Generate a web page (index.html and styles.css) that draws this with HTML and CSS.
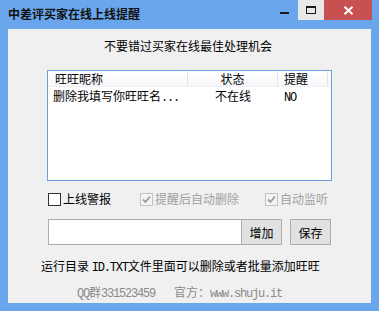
FILE: index.html
```html
<!DOCTYPE html>
<html lang="zh-CN">
<head>
<meta charset="utf-8">
<title>中差评买家在线上线提醒</title>
<link rel="stylesheet" href="styles.css">
</head>
<body>
<div class="window">
  <div class="titlebar">
    <div class="title">中差评买家在线上线提醒</div>
    <div class="controls">
      <div class="btn-min"><span class="min-glyph"></span></div>
      <div class="btn-max"><span class="max-glyph"></span></div>
      <div class="btn-close">
        <svg width="11" height="9" viewBox="0 0 11 9"><path d="M1.5 0.8 L9.5 8.2 M9.5 0.8 L1.5 8.2" stroke="#fff" stroke-width="2" fill="none"/></svg>
      </div>
    </div>
  </div>
  <div class="client">
    <div class="heading">不要错过买家在线最佳处理机会</div>
    <div class="listbox">
      <div class="list-head">
        <div class="col c1">旺旺昵称</div>
        <div class="col c2">状态</div>
        <div class="col c3">提醒</div>
        <div class="col c4"></div>
      </div>
      <div class="list-row">
        <div class="cell c1 r1">删除我填写你旺旺名<span class="mono">...</span></div>
        <div class="cell c2">不在线</div>
        <div class="cell c3"><span class="mono">NO</span></div>
      </div>
    </div>
    <div class="checks">
      <label class="chk"><span class="box"></span><span>上线警报</span></label>
      <label class="chk disabled"><span class="box checked"><svg width="11" height="11" viewBox="0 0 11 11"><path d="M2 5.5 L4.5 8 L9 2.5" stroke="#9a9a9a" stroke-width="1.8" fill="none"/></svg></span><span>提醒后自动删除</span></label>
      <label class="chk disabled"><span class="box checked"><svg width="11" height="11" viewBox="0 0 11 11"><path d="M2 5.5 L4.5 8 L9 2.5" stroke="#9a9a9a" stroke-width="1.8" fill="none"/></svg></span><span>自动监听</span></label>
    </div>
    <div class="inputrow">
      <div class="textbox"></div>
      <div class="button add">增加</div>
      <div class="button save">保存</div>
    </div>
    <div class="foot1">运行目录 <span class="mono">ID.TXT</span>文件里面可以删除或者批量添加旺旺</div>
    <div class="foot2"><span class="mono">QQ</span>群<span class="mono">331523459</span><span class="gap"></span>官方：<span class="mono">www.shuju.it</span></div>
  </div>
</div>
</body>
</html>
```
FILE: styles.css
```css
* { box-sizing: border-box; }
html, body { margin: 0; padding: 0; }
body {
  width: 379px;
  height: 311px;
  overflow: hidden;
  font-family: "Noto Sans CJK SC", "DejaVu Sans", sans-serif;
  font-size: 12px;
  color: #000;
}
.window {
  width: 379px;
  height: 311px;
  background: #6aa6ec;
  padding: 0 8px 8px 8px;
  display: flex;
  flex-direction: column;
}
.titlebar {
  height: 29px;
  display: flex;
  align-items: flex-start;
  margin-right: -1px;
}
.title {
  flex: 1;
  font-weight: bold;
  font-size: 12px;
  line-height: 28px;
  color: #111;
}
.controls { display: flex; height: 20px; }
.btn-min {
  width: 27px; height: 20px;
  position: relative;
}
.min-glyph {
  position: absolute;
  left: 9px; top: 12px;
  width: 9px; height: 2px; background: #1a1a1a;
}
.btn-max {
  width: 26px; height: 20px;
  background: #e8e8e8;
  display: flex; align-items: center; justify-content: center;
}
.max-glyph {
  display: block; width: 10px; height: 8px;
  border: 1px solid #1a1a1a; border-top-width: 2px;
}
.btn-close {
  width: 48px; height: 20px;
  background: #c75050;
  display: flex; align-items: center; justify-content: center;
}
.btn-close svg { display: block; }
.client {
  flex: 1;
  background: #f0f0f0;
  display: flex;
  flex-direction: column;
}
.mono {
  font-family: "Liberation Mono", monospace;
  font-size: 12px;
  letter-spacing: -1.2px;
}
.heading {
  margin-top: 9px;
  line-height: 16px;
  text-align: center;
  padding-right: 3px;
}
.listbox {
  margin-top: 16px;
  margin-left: 39px;
  width: 285px;
  height: 111px;
  border: 1px solid #6d9fdc;
  background: #fff;
}
.list-head {
  display: flex;
  height: 16px;
  background: linear-gradient(#ffffff, #f6f7f9);
  border-bottom: 1px solid #eef0f3;
}
.col, .cell { line-height: 16px; white-space: nowrap; overflow: hidden; }
.c1 { width: 140px; padding-left: 7px; }
.c2 { width: 90px; text-align: center; }
.c3 { width: 50px; padding-left: 6px; }
.c4 { flex: 1; }
.list-head .col { border-right: 1px solid #e4e6ea; }
.list-head .c4 { border-right: none; }
.list-row { display: flex; height: 17px; }
.list-row .cell { line-height: 17px; }
.r1 { padding-left: 5px; overflow: visible; }
.checks {
  margin-top: 10px;
  margin-left: 40px;
  height: 16px;
  display: grid;
  grid-template-columns: 92px 125px auto;
}
.chk {
  display: flex;
  align-items: center;
  gap: 2px;
  line-height: 16px;
}
.box {
  width: 13px; height: 13px;
  border: 1px solid #333;
  background: #fff;
  display: flex; align-items: center; justify-content: center;
}
.chk.disabled { color: #a0a0a0; }
.chk.disabled .box { border-color: #c2c2c2; background: #f4f4f4; }
.box svg { display: block; }
.inputrow {
  margin-top: 12px;
  margin-left: 40px;
  display: flex;
  height: 26px;
}
.textbox {
  width: 194px;
  height: 26px;
  border: 1px solid #adadad;
  background: #fff;
}
.button {
  height: 26px;
  border: 1px solid #adadad;
  background: #e1e1e1;
  display: flex; align-items: center; justify-content: center;
  font-size: 12px;
}
.add { width: 41px; margin-left: -1px; }
.save { width: 41px; margin-left: 8px; }
.foot1 {
  margin-top: 13px;
  line-height: 16px;
  padding-left: 33px;
  white-space: nowrap;
}
.foot2 {
  margin-top: 8px;
  line-height: 16px;
  padding-left: 69px;
  color: #8a8a8a;
  white-space: nowrap;
}
.gap { display: inline-block; width: 19px; }
```
